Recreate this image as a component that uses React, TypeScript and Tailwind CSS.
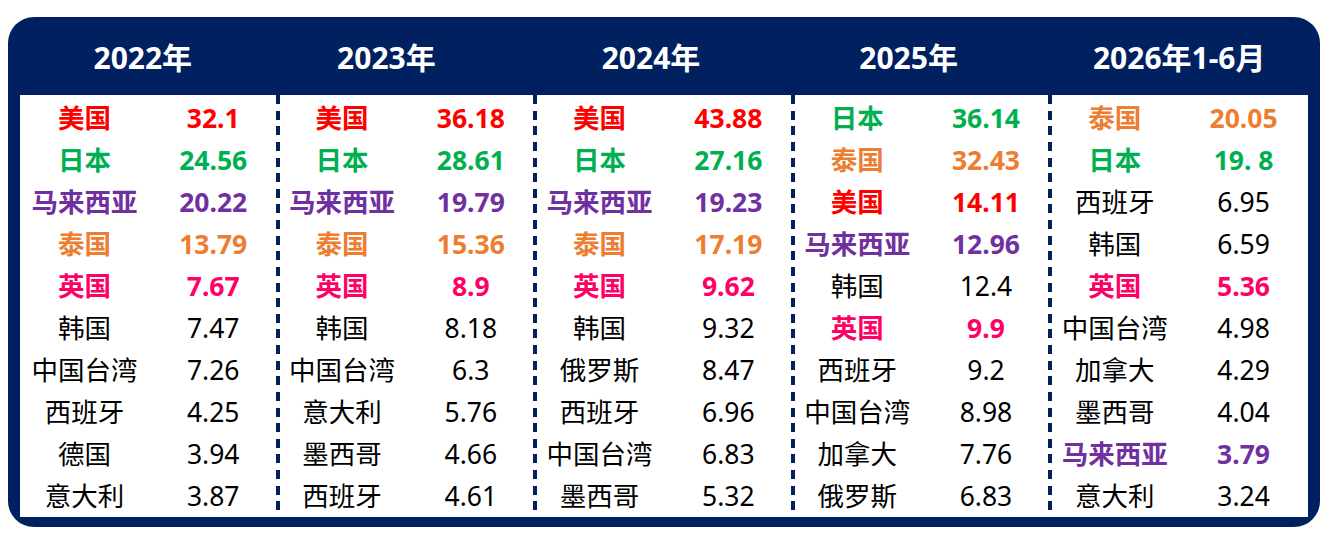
const RED = "text-[#FF0000] font-bold"
const GREEN = "text-[#00B050] font-bold"
const PURPLE = "text-[#7030A0] font-bold"
const ORANGE = "text-[#ED7D31] font-bold"
const PINK = "text-[#FF0066] font-bold"
const PLAIN = "text-black font-normal"

type Row = { name: string; value: string; tone: string }

const columns: { title: string; shift: string; rows: Row[] }[] = [
  {
    title: "2022年",
    shift: "pr-[12px]",
    rows: [
      { name: "美国", value: "32.1", tone: RED },
      { name: "日本", value: "24.56", tone: GREEN },
      { name: "马来西亚", value: "20.22", tone: PURPLE },
      { name: "泰国", value: "13.79", tone: ORANGE },
      { name: "英国", value: "7.67", tone: PINK },
      { name: "韩国", value: "7.47", tone: PLAIN },
      { name: "中国台湾", value: "7.26", tone: PLAIN },
      { name: "西班牙", value: "4.25", tone: PLAIN },
      { name: "德国", value: "3.94", tone: PLAIN },
      { name: "意大利", value: "3.87", tone: PLAIN },
    ],
  },
  {
    title: "2023年",
    shift: "pr-[40px]",
    rows: [
      { name: "美国", value: "36.18", tone: RED },
      { name: "日本", value: "28.61", tone: GREEN },
      { name: "马来西亚", value: "19.79", tone: PURPLE },
      { name: "泰国", value: "15.36", tone: ORANGE },
      { name: "英国", value: "8.9", tone: PINK },
      { name: "韩国", value: "8.18", tone: PLAIN },
      { name: "中国台湾", value: "6.3", tone: PLAIN },
      { name: "意大利", value: "5.76", tone: PLAIN },
      { name: "墨西哥", value: "4.66", tone: PLAIN },
      { name: "西班牙", value: "4.61", tone: PLAIN },
    ],
  },
  {
    title: "2024年",
    shift: "pr-[26px]",
    rows: [
      { name: "美国", value: "43.88", tone: RED },
      { name: "日本", value: "27.16", tone: GREEN },
      { name: "马来西亚", value: "19.23", tone: PURPLE },
      { name: "泰国", value: "17.19", tone: ORANGE },
      { name: "英国", value: "9.62", tone: PINK },
      { name: "韩国", value: "9.32", tone: PLAIN },
      { name: "俄罗斯", value: "8.47", tone: PLAIN },
      { name: "西班牙", value: "6.96", tone: PLAIN },
      { name: "中国台湾", value: "6.83", tone: PLAIN },
      { name: "墨西哥", value: "5.32", tone: PLAIN },
    ],
  },
  {
    title: "2025年",
    shift: "pr-[26px]",
    rows: [
      { name: "日本", value: "36.14", tone: GREEN },
      { name: "泰国", value: "32.43", tone: ORANGE },
      { name: "美国", value: "14.11", tone: RED },
      { name: "马来西亚", value: "12.96", tone: PURPLE },
      { name: "韩国", value: "12.4", tone: PLAIN },
      { name: "英国", value: "9.9", tone: PINK },
      { name: "西班牙", value: "9.2", tone: PLAIN },
      { name: "中国台湾", value: "8.98", tone: PLAIN },
      { name: "加拿大", value: "7.76", tone: PLAIN },
      { name: "俄罗斯", value: "6.83", tone: PLAIN },
    ],
  },
  {
    title: "2026年1-6月",
    shift: "pr-0",
    rows: [
      { name: "泰国", value: "20.05", tone: ORANGE },
      { name: "日本", value: "19. 8", tone: GREEN },
      { name: "西班牙", value: "6.95", tone: PLAIN },
      { name: "韩国", value: "6.59", tone: PLAIN },
      { name: "英国", value: "5.36", tone: PINK },
      { name: "中国台湾", value: "4.98", tone: PLAIN },
      { name: "加拿大", value: "4.29", tone: PLAIN },
      { name: "墨西哥", value: "4.04", tone: PLAIN },
      { name: "马来西亚", value: "3.79", tone: PURPLE },
      { name: "意大利", value: "3.24", tone: PLAIN },
    ],
  },
]

const font = "font-['Noto_Sans','Noto_Sans_CJK_SC',sans-serif]"

export default function App() {
  return (
    <div className={`w-[1334px] h-[544px] bg-white pt-[17px] pl-[8px] ${font}`}>
      <div className="w-[1312px] h-[510px] bg-[#002060] rounded-[26px] px-[12px] pb-[10px] flex flex-col">
        {/* Header */}
        <div className="h-[78px] grid grid-cols-5 shrink-0">
          {columns.map((col) => (
            <div
              key={col.title}
              className={`flex items-center justify-center text-white font-bold text-[30px] pt-[2px] ${col.shift}`}
            >
              {col.title}
            </div>
          ))}
        </div>

        {/* Body */}
        <div className="flex-1 bg-white flex">
          {columns.map((col, i) => (
            <div key={col.title} className="contents">
              {i > 0 && (
                <div className="w-[4px] -mx-[2px] shrink-0 bg-[image:repeating-linear-gradient(to_bottom,#002060_0_9px,transparent_9px_15.63px)]" />
              )}
              <div className="flex-1 flex flex-col pt-[2px]">
                {col.rows.map((r) => (
                  <div key={r.name} className="h-[42px] grid grid-cols-2 items-center text-[26.5px] leading-none">
                    <span className={`text-center ${r.tone}`}>{r.name}</span>
                    <span className={`text-center ${r.tone}`}>{r.value}</span>
                  </div>
                ))}
              </div>
            </div>
          ))}
        </div>
      </div>
    </div>
  )
}
